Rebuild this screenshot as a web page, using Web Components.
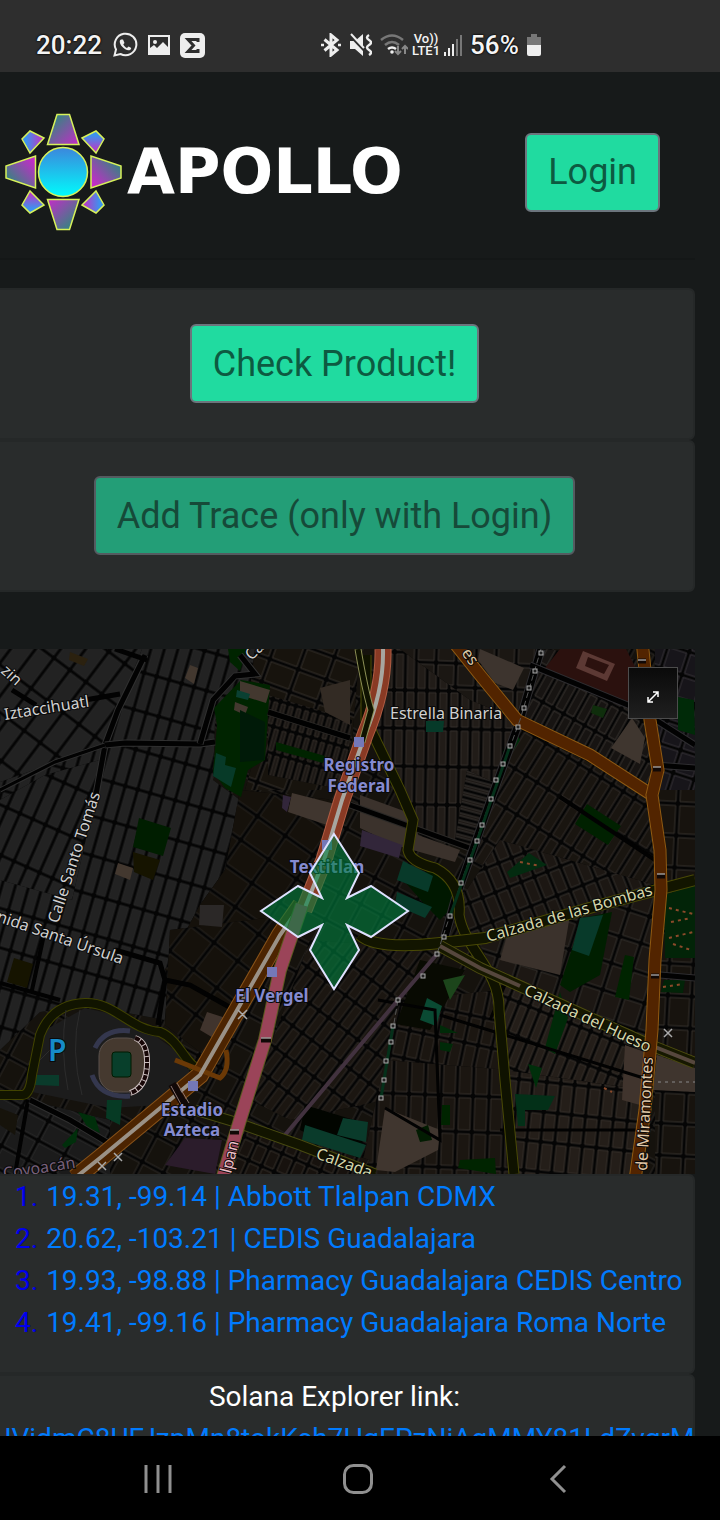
<!DOCTYPE html>
<html lang="en">
<head>
<meta charset="utf-8">
<meta name="viewport" content="width=device-width, initial-scale=1">
<title>Apollo</title>
<style>
html, body { margin: 0; background: #171a1a; }
body { font-family: Roboto, "Liberation Sans", sans-serif; color: #fff; }
</style>
</head>
<body>
<apollo-screen>
  <status-bar slot="status"></status-bar>
  <apollo-header></apollo-header>
  <apollo-card kind="action"><action-button>Check Product!</action-button></apollo-card>
  <apollo-card kind="action"><action-button disabled>Add Trace (only with Login)</action-button></apollo-card>
  <trace-map></trace-map>
  <apollo-card>
    <trace-list></trace-list>
  </apollo-card>
  <apollo-card>
    <explorer-link>JVidmC8UFJzpMn8tokKsh7HgEPzNiAgMMY81LdZvgrM</explorer-link>
  </apollo-card>
  <nav-bar slot="nav"></nav-bar>
</apollo-screen>

<script>
const define = (name, html, setup) => customElements.define(name, class extends HTMLElement {
  constructor() {
    super();
    const t = document.createElement('template');
    t.innerHTML = html;
    this.attachShadow({ mode: 'open' }).append(t.content.cloneNode(true));
  }
  connectedCallback() { if (setup) setup(this, this.shadowRoot); }
});

define('apollo-screen', `
<style>
  :host { display: flex; flex-direction: column; height: 100vh; overflow: hidden; }
  main { flex: 1; min-height: 0; overflow: hidden; display: flex; flex-direction: column; padding-right: 25px; }
  ::slotted(*) { flex-shrink: 0; }
</style>
<slot name="status"></slot>
<main><slot></slot></main>
<slot name="nav"></slot>`);

define('status-bar', `
<style>
  :host { display: grid; grid-template-columns: 285px 1fr; align-items: center; height: 54px; padding: 18px 0 0 36px; background: #2e2e2e; color: #f4f4f4; }
  div { display: flex; align-items: center; }
  .left { gap: 10px; }
  b { font-size: 26px; line-height: 32px; font-weight: 500; text-shadow: 0 0 2px #000, 0 0 2px #000; }
  .right { gap: 8px; }
  .lte { display: flex; flex-direction: column; align-items: center; font-size: 13px; line-height: 12px; font-weight: 500; margin: 0 -4px; }
  svg { display: block; flex: none; }
</style>
<div class="left">
  <b>20:22</b>
  <svg width="26" height="26" viewBox="0 0 26 26" fill="none" stroke="#eee" stroke-width="2"><path d="M2.500 23.500 4 17.500A10.800 10.800 0 1 1 8.500 22Z"/><path d="M9 7.500c-2 1-1.500 4 1 7s6 4.500 8 3.500c1.500-1 1.500-2 .5-2.500l-2-1-1.500 1.500c-1.500-.5-3-2-3.700-3.700l1.200-1.300L11 7.500z" fill="#eee" stroke="none"/></svg>
  <svg width="22" height="20" viewBox="0 0 22 20"><path d="M1 1h20v18H1z" fill="none" stroke="#eee" stroke-width="2"/><circle cx="7" cy="7" r="2" fill="#eee"/><path d="M2 18v-5l4-3 3 3 6-6 5 5v6z" fill="#eee"/></svg>
  <svg width="25" height="25" viewBox="0 0 25 25"><rect width="25" height="25" rx="5" fill="#eee"/><path d="M18 9V6.500H8L13.500 12.500 8 18.500h10V16" fill="none" stroke="#2e2e2e" stroke-width="3"/></svg>
</div>
<div class="right">
  <svg width="20" height="24" viewBox="0 0 20 24" fill="none" stroke="#eee" stroke-width="3"><path d="M3.500 6.500 16 17l-6 5V2l6 5L3.500 17.500"/><path d="M0 12h3M17 12h3" stroke-width="2.500"/></svg>
  <svg width="23" height="24" viewBox="0 0 23 24"><path d="M1 8h5l8-7v22l-8-7H1z" fill="#eee"/><path d="m0 1 16 17" stroke="#2e2e2e" stroke-width="3"/><path d="m2 1 13 14" stroke="#eee" stroke-width="2"/><path d="M20 2q-4 2.500 0 5t0 5 0 5 0 5" fill="none" stroke="#eee" stroke-width="2.500"/></svg>
  <svg width="28" height="24" viewBox="0 0 28 24" fill="none" stroke-width="2.500"><path d="M1 7q11-9 22 0M5 12q7-6 14 0" stroke="#777"/><path d="M8 16q4-3 8 0" stroke="#eee"/><circle cx="12" cy="19" r="1.800" fill="#eee"/><path d="M18 13v8m-3-3 3 3 3-3M25 21v-8m-3 3 3-3 3 3" stroke="#888" stroke-width="2"/></svg>
  <div class="lte"><span>Vo))</span><span>LTE1</span></div>
  <svg width="18" height="21" viewBox="0 0 18 21"><path d="M0 17h2v4H0zM4 13h2v8H4zM8 9h2v12H8z" fill="#eee"/><path d="M12 4h2v17h-2zM16 0h2v21h-2z" fill="#777"/></svg>
  <b>56%</b>
  <svg width="14" height="22" viewBox="0 0 14 22"><path d="M4 0h6v3h4v8H0V3h4z" fill="#777"/><path d="M0 11h14v9q0 2-2 2H2q-2 0-2-2z" fill="#eee"/></svg>
</div>`);

define('apollo-header', `
<style>
  :host { display: block; }
  header { display: flex; align-items: center; padding: 41px 35px 27px 5px; border-bottom: 2px solid #141717; margin-bottom: 28px; }
  a { display: flex; align-items: center; gap: 5px; color: #fff; text-decoration: none; font: bold 62px/64px "DejaVu Sans", sans-serif; }
  svg { display: block; }
  action-button { margin: 0 0 0 auto; }
</style>
<header>
  <a href="#">
    <svg width="117" height="118" viewBox="0 0 117 118" aria-hidden="true" stroke="#d7f25a" stroke-width="1.500">
      <defs>
        <linearGradient id="c" x2="0" y2="1"><stop stop-color="#3c86dc"/><stop offset="1" stop-color="#00fcfc"/></linearGradient>
        <linearGradient id="p" x2="1" y2="1"><stop offset=".1" stop-color="#2b8a7c"/><stop offset="1" stop-color="#c52bc8"/></linearGradient>
        <linearGradient id="p2" x1="1" y1="1" x2="0" y2="0"><stop offset=".1" stop-color="#2b8a7c"/><stop offset="1" stop-color="#c52bc8"/></linearGradient>
        <linearGradient id="q" y1="1" x2="1" y2="0"><stop offset=".1" stop-color="#2b8a7c"/><stop offset=".9" stop-color="#c52bc8"/></linearGradient>
        <linearGradient id="q2" x1="1" x2="0" y2="1"><stop offset=".1" stop-color="#2b8a7c"/><stop offset=".9" stop-color="#c52bc8"/></linearGradient>
        <linearGradient id="b" x2="1" y2="0"><stop offset=".2" stop-color="#3d92ee"/><stop offset="1" stop-color="#cc2bc0"/></linearGradient>
        <linearGradient id="b2" x1="1" x2="0" y2="0"><stop offset=".2" stop-color="#3d92ee"/><stop offset="1" stop-color="#cc2bc0"/></linearGradient>
        <linearGradient id="d" x2="0" y2="1"><stop offset=".2" stop-color="#3d92ee"/><stop offset="1" stop-color="#cc2bc0"/></linearGradient>
        <linearGradient id="d2" y1="1" x2="0" y2="0"><stop offset=".2" stop-color="#3d92ee"/><stop offset="1" stop-color="#cc2bc0"/></linearGradient>
      </defs>
      <circle cx="58" cy="59" r="24.500" fill="url(#c)"/>
      <path d="M52 1.500h12.500L74 31.500H42.500z" fill="url(#p)"/>
      <path d="M42.500 86.500H74l-9.500 30H52z" fill="url(#p2)"/>
      <path d="M30.500 43v32L1 65V53z" fill="url(#q)"/>
      <path d="M86 43v32l30-10V53z" fill="url(#q2)"/>
      <path d="M17 26 25 18 39 25 25 40z" fill="url(#b)"/>
      <path d="M77 25 91 18 99 26 91 40z" fill="url(#d)"/>
      <path d="M17 92 25 78 39 92 25 100z" fill="url(#d2)"/>
      <path d="M77 92 91 78 99 92 91 100z" fill="url(#b2)"/>
    </svg>
    <span>APOLLO</span>
  </a>
  <action-button>Login</action-button>
</header>`);

define('action-button', `
<style>
  :host { display: block; }
  button { display: block; box-sizing: border-box; height: 79px; padding: 0 21px; border: 2px solid #6c757d; border-radius: 6px; background: #20dba0; color: #0d5a41; font: 36px/54px Roboto, sans-serif; white-space: nowrap; cursor: pointer; }
  button:disabled { opacity: .65; cursor: default; }
</style>
<button type="button"><slot></slot></button>`, (host, root) => {
  root.querySelector('button').disabled = host.hasAttribute('disabled');
});

define('apollo-card', `
<style>
  :host { display: block; margin-left: -26px; border: 2px solid #252828; border-radius: 6px; background: #292c2c; }
  :host([kind="action"]) { display: flex; justify-content: center; padding: 34px 0 35px; }
</style>
<slot></slot>`);

define('trace-list', `
<style>
  :host { display: block; padding: 0 0 28px; font-size: 28px; line-height: 42px; }
  ol { list-style: none; margin: 0; padding: 0 0 0 39px; color: #0000ee; }
  li { display: flex; gap: 8px; }
  a { color: #007bff; text-decoration: none; white-space: nowrap; }
</style>
<ol></ol>`, (host, root) => {
  root.querySelector('ol').innerHTML = [
    '19.31, -99.14 | Abbott Tlalpan CDMX',
    '20.62, -103.21 | CEDIS Guadalajara',
    '19.93, -98.88 | Pharmacy Guadalajara CEDIS Centro',
    '19.41, -99.16 | Pharmacy Guadalajara Roma Norte'
  ].map((t, i) => `<li><span>${i + 1}.</span><a href="#">${t}</a></li>`).join('');
});

define('explorer-link', `
<style>
  :host { display: block; font-size: 28px; line-height: 42px; text-align: center; }
  p { margin: 0; }
  a { display: block; padding-left: 20px; text-align: left; color: #007bff; text-decoration: none; white-space: nowrap; }
</style>
<p>Solana Explorer link:</p>
<a href="#"><slot></slot></a>`);

define('nav-bar', `
<style>
  :host { display: block; background: #000; }
  nav { display: grid; grid-template-columns: repeat(3, 28%); justify-content: center; padding: 2px 4px 0 0; height: 82px; }
  button { display: grid; place-items: center; padding: 0; border: 0; background: none; }
</style>
<nav>
  <button aria-label="Recent apps"><svg width="28" height="30" viewBox="0 0 28 30"><path d="M2 1v28M14 1v28M26 1v28" stroke="#909090" stroke-width="3"/></svg></button>
  <button aria-label="Home"><svg width="32" height="32" viewBox="0 0 32 32"><rect x="2.500" y="2.500" width="27" height="27" rx="9" fill="none" stroke="#909090" stroke-width="3"/></svg></button>
  <button aria-label="Back"><svg width="18" height="30" viewBox="0 0 18 30"><path d="M16 2 3 15l13 13" fill="none" stroke="#909090" stroke-width="3"/></svg></button>
</nav>`);

/* Street blocks: outline, angle, block width, block height, fill, edge */
const districts = [
  ['0,649 695,649 695,1174 0,1174', 28, 24, 30, '#15120d', '#2d2a26'],
  ['0,649 255,649 250,690 215,720 213,780 240,800 225,870 200,905 170,960 165,1020 85,1005 40,1012 0,1050', 16, 13, 38, '#222', '#252525'],
  ['0,649 142,649 104,745 0,782', 37, 20, 38, '#222', '#252525'],
  ['0,800 45,775 100,760 88,830 72,900 0,880', 24, 14, 46, '#222', '#252525'],
  ['0,1100 28,1100 110,1120 110,1174 0,1174', 28, 30, 22, '#1b1b1b', '#2c2c2c'],
  ['255,649 360,649 352,740 330,790 245,790 265,720 250,690', 20, 30, 24, '#17130d', '#35302b'],
  ['268,695 352,720 345,790 268,775', 16, 8, 26, '#1d1916', '#332d28'],
  ['240,790 335,800 325,860 290,920 230,990 165,970 200,905 225,870', 35, 34, 29, '#15110b', '#26231f'],
  ['170,930 290,915 210,1060 165,1025', 38, 30, 34, '#15110b', '#26231f'],
  ['380,649 470,649 520,720 490,800 475,850 410,830 375,740', 1, 11, 38, '#211c18', '#332e2a'],
  ['400,649 540,649 520,720 470,700', 2, 20, 24, '#1b1713', '#37322e'],
  ['545,649 640,660 655,790 520,715', 29, 12, 32, '#171412', '#3a3532'],
  ['518,725 650,795 660,890 600,905 470,860 490,800', 32, 13, 38, '#191510', '#322d2a'],
  ['467,770 500,785 478,850 455,840', 105, 7, 34, '#1c1815', '#3a3532'],
  ['500,840 655,885 480,945 450,915', -22, 14, 26, '#1c1713', '#33302c'],
  ['655,790 695,790 695,1174 655,1174', 3, 24, 32, '#17130e', '#34302b'],
  ['655,649 695,649 695,790 655,790', 18, 22, 24, '#17151a', '#38343a'],
  ['310,940 440,950 400,1000 385,1100 290,1120 250,1100', 37, 12, 28, '#1b1611', '#2e2925'],
  ['400,1000 500,990 505,1070 385,1070', 12, 14, 28, '#1b1611', '#332d29'],
  ['385,1060 508,1070 514,1174 360,1174', 2, 16, 36, '#1b1611', '#332d29'],
  ['485,960 650,1045 650,1100 505,1080', 22, 11, 32, '#241e19', '#352f2a'],
  ['505,1070 645,1090 636,1174 514,1174', 6, 14, 30, '#241e19', '#352f2a'],
  ['480,945 655,895 655,1050 490,965', 18, 22, 28, '#1c1713', '#33302c'],
  ['235,1120 370,1160 360,1174 222,1174', 24, 14, 20, '#17120e', '#35302a']
];
/* Parks, fields and buildings */
const areas = [
  ['45,1030 85,1008 130,1018 175,1050 195,1080 160,1105 110,1108 32,1092', '#1c1c1c'],
  ['241,680 270,685 265,760 248,770 241,797 225,788 213,772 217,725 214,708', '#002400'],
  ['240,681 270,690 266,703 240,695', '#43382f'], ['237,690 250,694 248,700 236,697', '#0a4032'],
  ['235,702 248,707 245,715 234,710', '#43382f'], ['216,753 226,757 225,765 236,768 231,787 213,776', '#073a28'],
  ['240,710 265,722 264,760 240,762', '#001a08'], ['228,649 247,649 240,671 230,662', '#002400'],
  ['139,818 171,828 163,856 133,847', '#001e00'], ['118,863 133,868 130,880 115,874', '#43382f'],
  ['133,852 160,860 153,880 134,872', '#161400'], ['14,958 33,964 27,988 7,982', '#161400'],
  ['190,665 198,668 194,684 185,678', '#43382f'], ['70,652 88,659 84,666 69,660', '#2b210f'],
  ['276,742 325,756 323,763 276,750', '#002400'], ['320,688 350,680 350,725 325,712', '#332b24'],
  ['292,793 343,806 336,828 288,812', '#40362f'], ['283,795 291,797 287,812 282,808', '#32263a'],
  ['360,795 415,815 418,835 460,850 455,862 395,845 360,828', '#3b322c'], ['362,830 402,845 399,858 360,846', '#32263a'],
  ['480,649 524,668 513,690 495,683 478,660', '#3d342e'], ['560,649 626,649 647,690 625,705 545,668', '#2b110e'],
  ['583,651 615,664 607,681 576,668', '#5c3934'], ['588,657 609,665 604,674 585,666', '#2b110e'],
  ['632,718 645,738 640,764 611,748', '#3f362f'], ['587,804 621,826 608,845 575,824', '#002100'],
  ['593,705 607,709 603,718 591,713', '#0f2e0c'], ['426,721 444,721 443,732 426,732', '#063a29'],
  ['515,730 520,740 508,759 503,752', '#002f0b'], ['529,853 547,865 510,878 507,872', '#032b10'],
  ['405,882 430,870 450,880 454,905 440,920 425,905', '#001800'],
  ['403,861 433,876 428,892 397,880', '#083a2a'], ['397,892 432,907 425,918 395,905', '#083a2a'],
  ['582,918 612,912 600,975 570,992 560,985', '#001f00'], ['580,918 603,915 589,956 572,950', '#083a2a'],
  ['625,955 634,957 629,1000 615,997', '#002400'], ['664,895 695,885 695,958 665,958', '#022408'],
  ['664,980 685,980 683,993 661,992', '#022408'], ['678,697 694,700 695,735 678,730', '#002a08'],
  ['560,992 568,1018 555,1054 545,1048', '#002a08'], ['510,925 570,915 560,975 500,960', '#3b322c'],
  ['420,960 465,970 430,1030 396,1024', '#080a02'], ['443,980 465,975 450,1000', '#1c451b'],
  ['427,998 442,1006 436,1026 420,1020', '#0a4a33'], ['440,1025 458,1033 440,1033', '#002a08'],
  ['440,1042 453,1044 450,1052 440,1050', '#002a08'], ['528,1064 542,1068 536,1088', '#002f0b'],
  ['515,1094 555,1096 548,1110 525,1110 525,1126 518,1126', '#033018'], ['442,1105 450,1105 450,1125 441,1125', '#002400'],
  ['460,1160 495,1158 496,1174 458,1168', '#002400'], ['385,1108 440,1130 438,1150 395,1172 376,1170', '#40362f'],
  ['416,1130 428,1125 432,1140 420,1142', '#021c02'], ['305,1105 367,1124 358,1158 300,1130', '#020500'],
  ['305,1125 366,1145 360,1158 302,1140', '#0a3b2b'], ['343,1118 368,1122 366,1142 337,1135', '#0a3b2b'],
  ['625,1045 645,1052 640,1105 622,1100', '#40342d'], ['657,1055 695,1068 695,1092 653,1090', '#3f352e'],
  ['200,905 224,905 222,927 199,925', '#2b2827'], ['207,1012 232,1020 225,1045 200,1030', '#40342d'],
  ['185,1138 222,1140 215,1174 165,1165', '#2b1c2b'], ['0,1108 18,1115 15,1135 0,1125', '#16130b'],
  ['35,1075 59,1075 59,1086 35,1085', '#0a3b2b'], ['107,1100 122,1100 120,1125 106,1118', '#063a24'],
  ['78,1112 95,1117 100,1133 88,1128', '#002f0b'], ['62,1145 78,1128 76,1142 65,1148', '#002f0b']
];
/* Roads: path, width, colour, casing colour (optional) */
const roads = [
  ['M145 655 118 710 105 745 95 800', 5, '#020202', '#303030'], ['M105 745 125 743 200 744 215 742', 5, '#020202', '#303030'],
  ['M0 790 55 762 105 745', 3, '#020202', '#303030'], ['M12 690 36 705M85 700 120 694M115 649 147 660', 5, '#020202'],
  ['M200 744 213 700 235 676 255 674 240 655', 5, '#020202', '#303030'], ['M15 1174 28 1100M0 983 60 1000M32 990 45 930', 4, '#020202'],
  ['M115 950 160 963 165 980 158 1025M165 980 190 985 240 1013', 5, '#020202'], ['M30 1100 70 1120 120 1150', 5, '#020202', '#303030'],
  ['M268 712 350 738M350 805 475 850', 5, '#010101', '#2b2927'], ['M560 797 655 860', 4, '#020202'], ['M541 649 520 720 491 799 455 900 444 940', 7, '#020202', '#2e2d30'],
  ['M660 975 695 978M655 765 695 768M530 665 640 710 695 745', 5, '#020202', '#2e2d30'],
  ['M378 1000 435 1010 440 1140 385 1108M440 1015 650 1080M500 1130 640 1130M505 985 490 1020', 3, '#020202'],
  ['M437 954 398 1000 285 1135', 4, '#42323f'],
  ['M0 1095H22Q30 1095 32 1075L40 1035Q52 1004 85 1003C115 1002 130 1030 160 1032 180 1040 185 1065 200 1070', 8, '#111400', '#414300'],
  ['M195 1110 235 1122 300 1145 375 1174', 9, '#121400', '#484a10'],
  ['M366 655V720L400 790 413 820 408 850Q410 862 435 868 462 882 459 915C465 950 500 970 499 1010L505 1080 514 1174', 9, '#0f1200', '#4a4a05'],
  ['M360 935Q375 950 440 943L485 938 600 905 695 880', 10, '#121500', '#4a4a05'],
  ['M440 946 480 968 650 1045 695 1063', 10, '#161800', '#4d4c10'],
  ['M440 946 480 968 520 986M645 1043 695 1063', 4, '#56473d'],
  ['M301 905 280 935 200 1075 100 1158 75 1178', 16, '#4c2401', '#875219'],
  ['M175 1060 220 1078Q230 1070 226 1050', 5, '#6b3906'],
  ['M301 905 280 935 200 1075 100 1158 75 1178', 4, '#9a9186'],
  ['M383 649Q384 690 365 735L342 800 324 860 304 910', 15, '#893a24', '#b05d44'],
  ['M383 649Q384 690 365 735L342 800 324 860 304 910', 4, '#a7a6a0'],
  ['M358 649Q365 690 371 710L362 742', 5, '#0f1200', '#8b8e54'],
  ['M302 905 280 970 265 1040 240 1120 222 1180', 12, '#9b4459', '#5c5a20'],
  ['M452 640 480 675 517 720 590 755 652 795', 11, '#522400', '#8f5a12'],
  ['M642 640 650 720 658 770 652 795 660 850 661 890 655 960 652 1030 645 1110 635 1180', 11, '#522400', '#8f5a12']
];
const pylons = [[541,653],[535,671],[529,688],[524,708],[518,727],[510,746],[503,764],[496,780],[491,799],[482,825],[477,841],[470,860],[461,883],[450,916],[444,937],[437,954],[423,976],[398,1000],[393,1026],[391,1042],[386,1061],[384,1080],[381,1098]];
const stations = [[359,742],[327,845],[272,972],[193,1086]];
/* Street names: text, x, y, angle, size, colour */
const names = [
  ['e Iztaccihuatl', -8, 722, -9, 16, '#d0d0d0'], ['zin', 0, 672, 42, 16, '#d0d0d0'], ['Calle Santo Tomás', 58, 924, -72, 16, '#d0d0d0'],
  ['nida Santa Úrsula', -4, 921, 19, 16, '#d0d0d0'], ['Ca', 251, 661, -42, 16, '#d0d0d0'], ['es', 461, 653, 54, 16, '#dcc6a4'],
  ['Estrella Binaria', 390, 719, 0, 16, '#d0d0d0'], ['Calzada de las Bombas', 488, 942, -16, 16, '#d4d7a8'],
  ['Calzada del Hueso', 523, 994, 25, 16, '#d4d7a8'], ['de Miramontes', 647, 1171, -87, 16, '#e0c8a8'],
  ['lpan', 231, 1174, -76, 16, '#ecc0c9'], ['Coyoacán', 4, 1179, -9, 16, '#77607a'], ['Calzada', 315, 1158, 20, 16, '#d4d7a8']
];
const stops = [['Registro', 359, 771], ['Federal', 359, 792], ['Textitlan', 327, 873], ['El Vergel', 272, 1002], ['Estadio', 192, 1116], ['Azteca', 192, 1136]];

const mapMarkup = () => {
  const defs = districts.map(([pts, a, w, h, f, s], i) => `
    <pattern id="b${i}" width="${w * 2}" height="${h * 2}" patternUnits="userSpaceOnUse" patternTransform="rotate(${a})">
      <path d="M1 1h${w - 4}v${h - 4}h-${w - 4}zM${w + 1} 1h${w - 4}v${h - 4}h-${w - 4}zM1 ${h + 1}h${w - 4}v${h - 4}h-${w - 4}zM${w + 1} ${h + 1}h${w - 4}v${h - 4}h-${w - 4}z" fill="${f}" stroke="${s}"/>
    </pattern>`).join('');
  const poly = (p, f) => `<polygon points="${p}" fill="${f}"/>`;
  return `<defs>${defs}</defs><rect x="-26" y="649" width="721" height="525" fill="#050505"/>`
    + districts.map((d, i) => `<polygon points="${d[0]}" fill="#050505"/><polygon points="${d[0]}" fill="url(#b${i})"/>`).join('')
    + areas.map(a => poly(...a)).join('')
    + roads.map(([d, w, c, k]) => (k ? `<path d="${d}" stroke="${k}" stroke-width="${w + 2}" fill="none"/>` : '') + `<path d="${d}" stroke="${c}" stroke-width="${w}" fill="none"/>`).join('')
    + `<path d="M541 649 520 720 491 799 461 883 437 954M398 1000 381 1098" fill="none" stroke="#555" stroke-dasharray="6 3"/>`
    + `<path d="M510 746 477 841 450 916M393 1026 381 1098" fill="none" stroke="#05301a" stroke-width="3"/>`
    + pylons.map(([x, y]) => `<rect x="${x - 2}" y="${y - 2}" width="4" height="4" fill="#222" stroke="#aaa"/>`).join('')
    + `<g fill="none"><path d="M66 1010Q60 1050 68 1090M80 1010Q70 1050 82 1095M40 1060l12-12" stroke="#2c2c2c"/>
       <path d="M95 1048Q105 1028 130 1031M92 1075Q100 1098 130 1096" stroke="#34374e" stroke-width="5"/>
       <rect x="99" y="1038" width="46" height="54" rx="18" fill="#45392f" stroke="#5a514c"/><rect x="112" y="1052" width="19" height="25" rx="3" fill="#083f2b" stroke="#001b00"/>
       <path d="M135 1038Q148 1042 147 1065T130 1093" stroke="#c9bcbc" stroke-width="6"/><path d="M135 1038Q148 1042 147 1065T130 1093" stroke="#170606" stroke-width="4" stroke-dasharray="5 1"/>
       <path d="m172 1084 14 24" stroke="#110808" stroke-width="8"/><path d="m171 1086 12 22M177 1083 189 1103" stroke="#8b7470"/>
       <path d="m664 1029 8 8m0-8-8 8M238 1010l9 9m0-9-9 9M98 1162l8 8m0-8-8 8M114 1153l8 8m0-8-8 8" stroke="#aaa" stroke-width="1.500"/>
       <path d="M658 1082h37" stroke="#888" stroke-dasharray="3 4"/>
       <path d="m669 908 24 6m-22 8 20-4m-22 20 24-6m-20 12 18 6M520 862l20 4M663 987l20-3M604 1088l8 4" stroke="#8c4a2a" stroke-width="2" stroke-dasharray="3 4"/>
       <path d="M261 1040h10M230 1132h9M638 661h8M653 769h8M657 876h8M651 976h8" stroke="#100806" stroke-width="5"/>
       <path d="M261 1038h10M230 1130h9M638 660h8M653 767h8M657 874h8M651 975h8" stroke="#ddd" stroke-width="1"/></g>`
    + stations.map(([x, y]) => `<rect x="${x - 5}" y="${y - 5}" width="10" height="10" fill="#7478b8"/>`).join('')
    + `<g font-family="Noto Sans, sans-serif" stroke="#0a0a0a" stroke-width="2" paint-order="stroke">`
    + names.map(([t, x, y, a, s, c]) => `<text transform="translate(${x} ${y}) rotate(${a})" font-size="${s}" fill="${c}">${t}</text>`).join('')
    + stops.map(([t, x, y]) => `<text x="${x}" y="${y}" font-size="17" font-weight="700" text-anchor="middle" fill="#858bd0">${t}</text>`).join('')
    + `<text x="48" y="1061" font-size="30" font-weight="600" fill="#168bc8">P</text></g>`
    + `<path d="M334 834 359 873 347 898 371 886 408 911 371 937 347 925 359 950 334 989 310 950 322 925 298 937 261 911 298 886 322 898 310 873Z" fill="#008040" fill-opacity=".6" stroke="#dfe2ff" stroke-width="2"/>`;
};

define('trace-map', `
<style>
  :host { display: block; position: relative; margin: 57px 0 0 -26px; overflow: hidden; }
  svg { display: block; width: 100%; height: auto; }
  button { position: absolute; top: 18px; right: 17px; width: 50px; height: 52px; padding: 0; border: 1px solid #4c4c4c; background: linear-gradient(#0a0a0a, #1f1f1f); }
  button svg { width: 14px; height: 14px; margin: 8px auto 0; }
</style>
<svg id="map" viewBox="-26 649 721 525" role="img" aria-label="Trace map"></svg>
<button aria-label="Full screen"><svg viewBox="0 0 14 14" fill="none" stroke="#fff" stroke-width="1.500"><path d="m2 12 10-10M7 2h5v5M2 7v5h5"/></svg></button>`,
(host, root) => { root.querySelector('#map').innerHTML = mapMarkup(); });
</script>
</body>
</html>
